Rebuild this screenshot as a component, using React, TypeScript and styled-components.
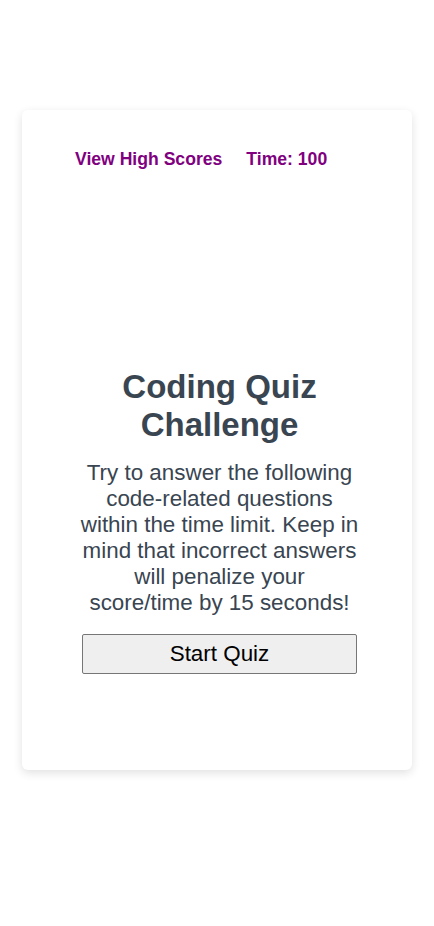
import styled, { createGlobalStyle } from "styled-components";

const GlobalStyle = createGlobalStyle`
  body {
    margin: 0;
    background: #ffffff;
    font-family: "Liberation Sans", Arial, sans-serif;
  }
`;

const Page = styled.div`
  padding-top: 110px;
  padding-bottom: 40px;
`;

const Card = styled.main`
  width: 390px;
  height: 660px;
  margin: 0 auto;
  box-sizing: border-box;
  padding-top: 39px;
  background: #ffffff;
  border-radius: 6px;
  box-shadow: 0 3px 10px rgba(0, 0, 0, 0.12);
`;

const Header = styled.header`
  display: flex;
  gap: 24px;
  padding-left: 53px;
`;

const HeaderItem = styled.span`
  color: #800080;
  font-size: 17.6px;
  font-weight: bold;
`;

const Intro = styled.section`
  width: 279px;
  margin: 198px 0 0 58px;
  display: flex;
  flex-direction: column;
  align-items: center;
  text-align: center;
  color: #394551;
`;

const Title = styled.h1`
  margin: 0;
  font-size: 33px;
  font-weight: bold;
`;

const Blurb = styled.p`
  margin: 16px 0 18px;
  font-size: 22.4px;
`;

const StartButton = styled.button`
  width: 275px;
  font-family: "Liberation Sans", Arial, sans-serif;
  font-size: 22.4px;
  color: #000000;
  background: #efefef;
  border: 1px solid #767676;
  border-radius: 2px;
  padding: 6px 0;
`;

function App() {
  return (
    <Page>
      <GlobalStyle />
      <Card>
        <Header>
          <HeaderItem>View High Scores</HeaderItem>
          <HeaderItem>Time: 100</HeaderItem>
        </Header>
        <Intro>
          <Title>Coding Quiz Challenge</Title>
          <Blurb>
            Try to answer the following code-related questions within the time
            limit. Keep in mind that incorrect answers will penalize your
            score/time by 15 seconds!
          </Blurb>
          <StartButton>Start Quiz</StartButton>
        </Intro>
      </Card>
    </Page>
  );
}

export default App;
